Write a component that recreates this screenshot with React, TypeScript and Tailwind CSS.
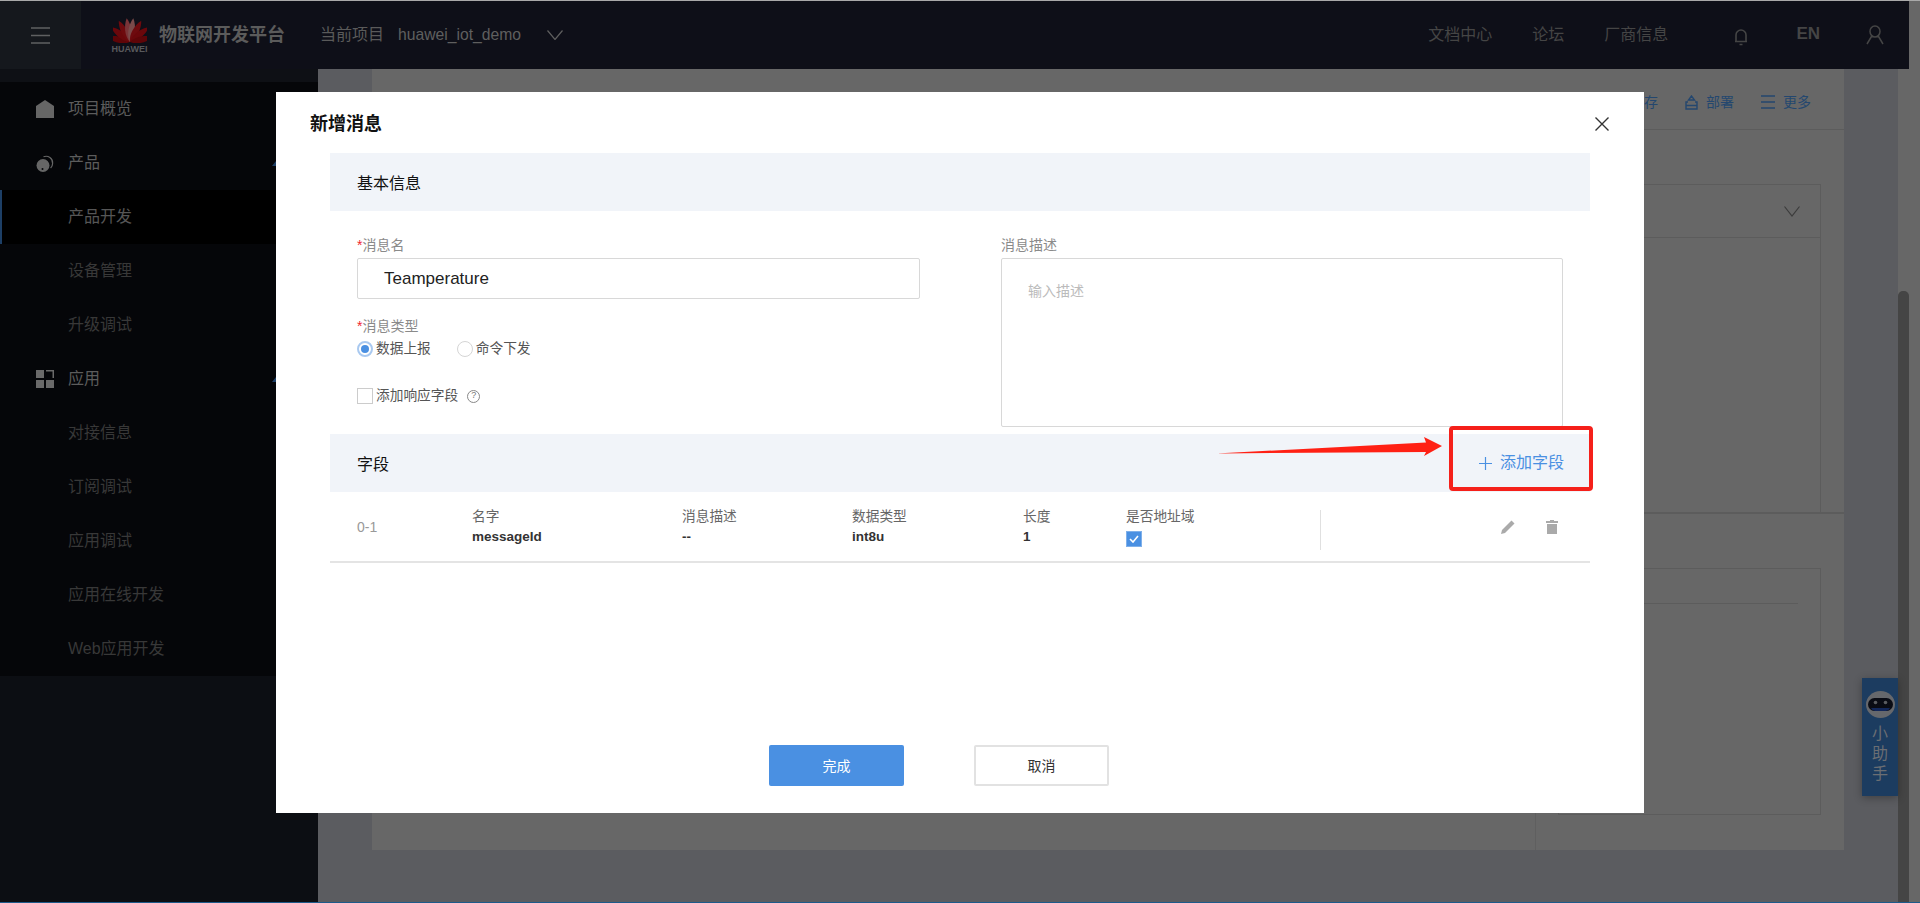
import { type ReactNode } from "react";

function Logo() {
  const petals = [
    { r: -78, c: "#5e0508" },
    { r: -52, c: "#6a070b" },
    { r: -28, c: "#6e0a0e" },
    { r: -8, c: "#7a3438" },
    { r: 8, c: "#7a4a4a" },
    { r: 28, c: "#6e0a0e" },
    { r: 52, c: "#6a070b" },
    { r: 78, c: "#5e0508" },
  ];
  return (
    <div className="flex w-[35px] flex-col items-center">
      <svg width="34" height="26" viewBox="-17 -26 34 26">
        {petals.map((p) => (
          <path
            key={p.r}
            d="M0 -1 C-4.5 -7 -4 -18 0 -25 C4 -18 4.5 -7 0 -1Z"
            fill={p.c}
            transform={`rotate(${p.r} 0 -1)`}
          />
        ))}
      </svg>
      <span className="mt-[1px] text-[9px] leading-[10px] font-bold text-[#58595c]">HUAWEI</span>
    </div>
  );
}

function SideItem({ label, icon, active, sub, arrow }: { label: string; icon?: ReactNode; active?: boolean; sub?: boolean; arrow?: boolean }) {
  return (
    <div
      className={
        active
          ? "flex h-[54px] items-center border-l-2 border-[#1d3f66] bg-black pr-[38px] pl-[66px] text-[#565656]"
          : sub
            ? "flex h-[54px] items-center pr-[38px] pl-[68px] text-[#383838]"
            : "relative flex h-[54px] items-center pr-[38px] pl-[68px] text-[#5c5c5c]"
      }
    >
      {icon && <span className="absolute left-[36px] flex h-[18px] w-[18px] items-center justify-center">{icon}</span>}
      <span className="flex-1 text-base">{label}</span>
      {arrow && (
        <svg width="8" height="5" viewBox="0 0 8 5" className="text-[#1d3f66]">
          <path d="M4 0L8 5H0Z" fill="currentColor" />
        </svg>
      )}
    </div>
  );
}

function SectionHead({ title, children }: { title: string; children?: ReactNode }) {
  return (
    <div className="flex h-[58px] shrink-0 items-center justify-between bg-[#f1f4f9] pr-[26px] pl-[27px]">
      <span className="pt-[4px] text-base text-[#111]">{title}</span>
      {children}
    </div>
  );
}

function Label({ text, required }: { text: string; required?: boolean }) {
  return (
    <div className="h-5 text-sm leading-5 text-[#8a8a8a]">
      {required && <span className="text-[#f0262f]">*</span>}
      {text}
    </div>
  );
}

function Field({ label, value, width }: { label: string; value: string; width: string }) {
  return (
    <div className={width}>
      <div className="text-[13.7px] leading-5 text-[#666]">{label}</div>
      <div className="text-[13.5px] leading-5 font-bold text-[#333]">{value}</div>
    </div>
  );
}

export default function App() {
  return (
    <div className="flex h-[903px] w-[1920px] flex-col overflow-hidden bg-[#676767] font-['Liberation_Sans','Noto_Sans_CJK_SC',sans-serif]">
      <div className="h-px bg-[#a9a9a9]" />
      <div className="relative flex h-[901px]">
        <div className="flex w-[1909px] flex-col">
          {/* top bar */}
          <header className="flex h-[68px] items-center bg-[#0e0f18]">
            <div className="flex h-full w-[81px] items-center justify-center bg-[#15181d]">
              <svg width="19" height="17" viewBox="0 0 19 17" stroke="#5f6062" strokeWidth="1.5">
                <path d="M0 1H19M0 8.5H19M0 16H19" />
              </svg>
            </div>
            <div className="ml-[31px]">
              <Logo />
            </div>
            <span className="ml-[12px] text-lg font-bold text-[#5b5b5b]">物联网开发平台</span>
            <span className="ml-[35px] text-base text-[#5a5a5a]">当前项目</span>
            <span className="ml-[14px] text-[15.7px] text-[#5f5f5f]">huawei_iot_demo</span>
            <svg width="16" height="10" viewBox="0 0 16 10" fill="none" stroke="#5f5f5f" strokeWidth="1.2" className="ml-[26px]">
              <path d="M0.5 0.5L8 9.5L15.5 0.5" />
            </svg>
            <div className="ml-auto flex items-center text-base text-[#454545]">
              <span>文档中心</span>
              <span className="ml-[40px]">论坛</span>
              <span className="ml-[40px]">厂商信息</span>
              <svg width="14" height="18" viewBox="0 0 14 18" fill="none" stroke="#454545" strokeWidth="1.6" className="mt-[3px] ml-[66px]">
                <path d="M2 13V7a5 5 0 0 1 10 0v6M1 13.5H13M5.5 16.5H8.5" />
              </svg>
              <span className="mb-[2px] ml-[48px] text-[17px] font-bold">EN</span>
              <svg width="18" height="20" viewBox="0 0 18 20" fill="none" stroke="#454545" strokeWidth="1.5" className="mr-[25px] ml-[46px]">
                <path d="M9 1a5 5 0 0 1 5 5.5c0 3-2.2 5.5-5 5.5s-5-2.5-5-5.5A5 5 0 0 1 9 1ZM5.8 11L1 19M12.2 11L17 19" />
              </svg>
            </div>
          </header>

          <div className="flex flex-1">
            {/* side menu */}
            <aside className="flex w-[318px] flex-col bg-[#0c0e13]">
              <div className="h-[13px] bg-[#0e1015]" />
              <nav className="bg-[#050609]">
                <SideItem
                  label="项目概览"
                  icon={
                    <svg width="18" height="18" viewBox="0 0 18 18" fill="#666">
                      <path d="M9 0L18 6V18H0V6Z" />
                    </svg>
                  }
                />
                <SideItem
                  label="产品"
                  arrow
                  icon={
                    <svg width="18" height="18" viewBox="0 0 18 18">
                      <path d="M7.5 2.8A6.6 6.6 0 0 1 16.6 9.5C16.6 11.4 15.8 12.8 14.6 14" fill="none" stroke="#666" strokeWidth="1.2" />
                      <circle cx="7" cy="11.5" r="6.5" fill="#666" />
                      <circle cx="6.5" cy="15" r="1" fill="#050609" />
                    </svg>
                  }
                />
                <SideItem label="产品开发" active />
                <SideItem label="设备管理" sub />
                <SideItem label="升级调试" sub />
                <SideItem
                  label="应用"
                  arrow
                  icon={
                    <svg width="18" height="18" viewBox="0 0 18 18" fill="#6a6a6a">
                      <path d="M0 0H8V8H0ZM0 10H8V18H0ZM10 10H18V18H10ZM10 0H18V8H16.5V1.5H10Z" />
                    </svg>
                  }
                />
                <SideItem label="对接信息" sub />
                <SideItem label="订阅调试" sub />
                <SideItem label="应用调试" sub />
                <SideItem label="应用在线开发" sub />
                <SideItem label="Web应用开发" sub />
              </nav>
            </aside>

            {/* page behind the dialog */}
            <main className="flex-1 bg-[#5b5c60] px-[54px] pb-[52px]">
              <div className="flex h-full flex-col bg-[#676767]">
                <div className="flex h-[61px] shrink-0 items-center justify-end gap-[27px] border-b border-[#5c5c5c] pt-[6px] pr-[33px] text-sm text-[#24476f]">
                  <span>保存</span>
                  <span className="flex items-center gap-[8px]">
                    <svg width="13" height="15" viewBox="0 0 13 15" fill="none" stroke="#24476f" strokeWidth="1.4">
                      <path d="M3 7H1V14H12V7H10M6.5 1L3.5 5H9.5ZM1 10.5H12" />
                    </svg>
                    部署
                  </span>
                  <span className="flex items-center gap-[8px]">
                    <svg width="14" height="14" viewBox="0 0 14 14" stroke="#24476f" strokeWidth="1.4">
                      <path d="M0 1H14M0 7H14M0 13H14" />
                    </svg>
                    更多
                  </span>
                </div>
                <div className="flex h-[384px] shrink-0 justify-end border-b-2 border-[#5c5c5c] pt-[54px] pr-[23px]">
                  <div className="h-full w-[300px] border-r border-[#5c5c5c]">
                    <div className="flex h-[54px] items-center justify-end border-y border-[#5c5c5c] pr-[20px]">
                      <svg width="16" height="11" viewBox="0 0 16 11" fill="none" stroke="#3c3c3c" strokeWidth="1.2">
                        <path d="M0.5 0.5L8 10L15.5 0.5" />
                      </svg>
                    </div>
                  </div>
                </div>
                <div className="flex flex-1 justify-end">
                  <div className="w-[309px] border-l border-[#5f5f5f] pt-[54px] pr-[23px] pb-[35px] pl-[22px]">
                    <div className="h-full border border-[#5c5c5c] pt-[34px]">
                      <div className="mr-[22px] border-b border-[#5c5c5c]" />
                    </div>
                  </div>
                </div>
              </div>
            </main>
            <div className="flex w-[11px] flex-col pt-[222px]">
              <div className="flex-1 rounded-t-[5px] bg-[#454545]" />
            </div>
          </div>
        </div>
        <div className="w-[11px]" />

        {/* helper tab */}
        <div className="absolute top-[677px] left-[1862px] flex h-[118px] w-[36px] flex-col items-center bg-[#1c3c60] pt-[13px] shadow-[0_2px_8px_rgba(0,0,0,0.3)]">
          <svg width="29" height="27" viewBox="0 0 29 27">
            <ellipse cx="14.5" cy="13.5" rx="14.5" ry="13.5" fill="#66686c" />
            <rect x="2" y="7" width="25" height="13" rx="6.5" fill="#0a0c14" />
            <path d="M5 17H24A5 5 0 0 1 20 20H9A5 5 0 0 1 5 17Z" fill="#12275a" />
            <circle cx="9.5" cy="11.5" r="1.8" fill="#5a5c60" />
            <circle cx="19.5" cy="11.5" r="1.8" fill="#5a5c60" />
          </svg>
          <div className="mt-[6px] flex flex-col items-center text-base leading-[20px] text-[#6b6e73]">
            <span>小</span>
            <span>助</span>
            <span>手</span>
          </div>
        </div>

        {/* dialog */}
        <div className="absolute top-[91px] left-[276px] flex h-[721px] w-[1368px] flex-col bg-white px-[54px]">
          <div className="-mr-[19px] -ml-[20px] flex h-[61px] shrink-0 items-center justify-between">
            <span className="pt-[2px] text-lg font-bold text-[#111]">新增消息</span>
            <svg width="14" height="14" viewBox="0 0 14 14" stroke="#333" strokeWidth="1.4" className="mt-[2px]">
              <path d="M0.5 0.5L13.5 13.5M13.5 0.5L0.5 13.5" />
            </svg>
          </div>

          <SectionHead title="基本信息" />

          <div className="grid h-[223px] shrink-0 grid-cols-[563px_562px] gap-x-[81px] px-[27px] pt-[24px]">
            <div>
              <Label text="消息名" required />
              <div className="mt-[3px] flex h-[41px] items-center rounded-[2px] border border-[#d8d8d8] pl-[26px] text-[17px] text-[#222]">Teamperature</div>
              <div className="mt-[17px]">
                <Label text="消息类型" required />
              </div>
              <div className="mt-[5px] flex h-4 items-center text-[13.7px] text-[#555]">
                <span className="flex h-4 w-4 items-center justify-center rounded-full border-2 border-[#a9c9f0]">
                  <span className="h-2 w-2 rounded-full bg-[#4a90e2]" />
                </span>
                <span className="ml-[3px]">数据上报</span>
                <span className="ml-[26px] h-4 w-4 rounded-full border border-[#d5d5d5]" />
                <span className="ml-[3px]">命令下发</span>
              </div>
              <div className="mt-[31px] flex h-4 items-center text-[13.7px] text-[#555]">
                <span className="h-4 w-4 border border-[#ccc]" />
                <span className="ml-[3px]">添加响应字段</span>
                <span className="ml-[9px] flex h-[13px] w-[13px] items-center justify-center rounded-full border border-[#888] text-[9px] text-[#777]">?</span>
              </div>
            </div>
            <div>
              <Label text="消息描述" />
              <div className="mt-[3px] h-[169px] rounded-[2px] border border-[#d8d8d8] px-[26px] pt-[22px] text-sm text-[#bbb]">输入描述</div>
            </div>
          </div>

          <SectionHead title="字段">
            <span className="flex items-center gap-[8px] text-base text-[#4a90e2]">
              <svg width="13" height="13" viewBox="0 0 13 13" stroke="#4a90e2" strokeWidth="1.2">
                <path d="M6.5 0V13M0 6.5H13" />
              </svg>
              添加字段
            </span>
          </SectionHead>

          <div className="flex h-[71px] shrink-0 items-center border-b-2 border-[#e4e4e4] px-[27px]">
            <div className="w-[115px] text-sm text-[#999]">0-1</div>
            <Field width="w-[210px]" label="名字" value="messageId" />
            <Field width="w-[170px]" label="消息描述" value="--" />
            <Field width="w-[171px]" label="数据类型" value="int8u" />
            <Field width="w-[103px]" label="长度" value="1" />
            <div className="h-10 w-[194px]">
              <div className="text-[13.7px] leading-5 text-[#666]">是否地址域</div>
              <div className="mt-[4px] flex h-4 w-4 items-center justify-center border border-[#7fb0ea] bg-[#4a90e2]">
                <svg width="10" height="8" viewBox="0 0 10 8" fill="none" stroke="#fff" strokeWidth="1.6">
                  <path d="M1 4L4 7L9 1" />
                </svg>
              </div>
            </div>
            <div className="mt-[6px] h-10 border-l border-[#e0e0e0]" />
            <div className="ml-auto flex items-center gap-[31px] pr-[5px]">
              <svg width="14" height="14" viewBox="0 0 14 14" fill="#aaa">
                <path d="M10.5 0.5L13.5 3.5L4 13L0 14L1 10Z" />
              </svg>
              <svg width="12" height="14" viewBox="0 0 12 14" fill="#aaa">
                <path d="M4 0H8V1H12V3H0V1H4ZM1 4H11V14H1Z" />
              </svg>
            </div>
          </div>

          <div className="mt-auto flex gap-[70px] pb-[27px] pl-[439px] text-sm">
            <button className="flex h-[41px] w-[135px] items-center justify-center rounded-[2px] bg-[#4a90e2] text-white">完成</button>
            <button className="flex h-[41px] w-[135px] items-center justify-center rounded-[2px] border-2 border-[#e2e2e2] text-[#333]">取消</button>
          </div>

          {/* red annotation */}
          <svg width="226" height="20" viewBox="0 0 226 20" className="absolute top-[345px] left-[940px]">
            <path d="M0 16.5L210 5.5L208 0L226 9L208 19L210 15Z" fill="#ff2014" />
          </svg>
          <div className="absolute top-[334px] left-[1173px] h-[65px] w-[144px] rounded-[4px] border-4 border-[#f5201a]" />
        </div>
      </div>
      <div className="h-px bg-[#1d5a8a]" />
    </div>
  );
}
